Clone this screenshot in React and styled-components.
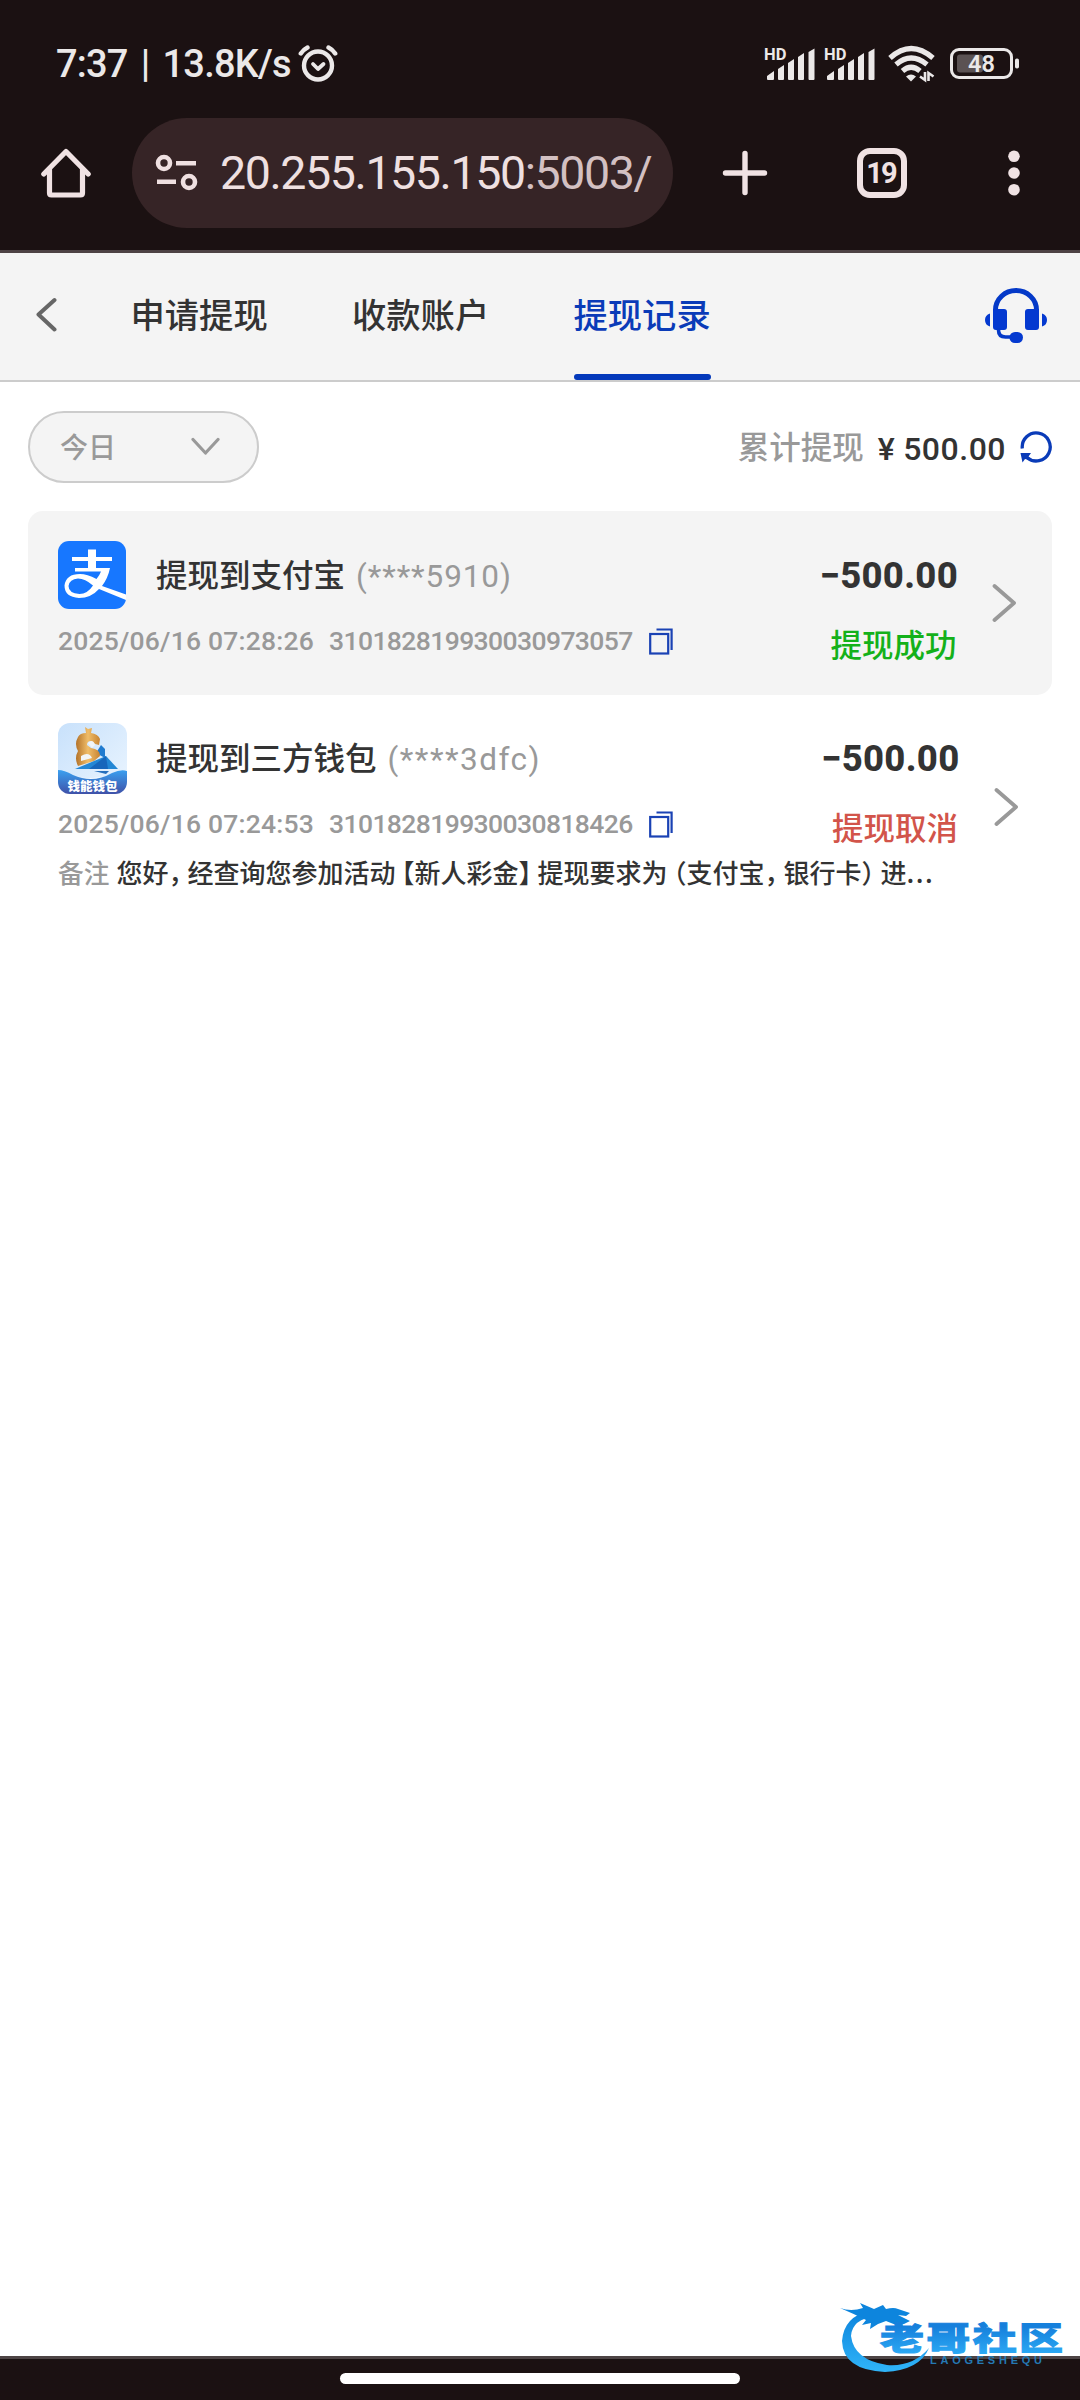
import React from "react";
import styled, { createGlobalStyle } from "styled-components";

const GlobalStyle = createGlobalStyle`
  * { box-sizing: border-box; }
  html, body { margin: 0; padding: 0; background: #fff; }
  body { font-family: Roboto, "Noto Sans CJK SC", sans-serif; font-weight: 500; color: #333; }
  svg { display: block; flex: none; }
`;

const Screen = styled.div`
  width: 1080px;
  height: 2400px;
  display: flex;
  flex-direction: column;
  background: #fff;
  overflow: hidden;
`;

/* ---------- system and browser chrome ---------- */

const Chrome = styled.header`
  height: 253px;
  flex: none;
  background: #1b1112;
  border-bottom: 3px solid #4d4244;
`;

const StatusBar = styled.div`
  height: 118px;
  display: flex;
  align-items: center;
  padding: 9px 60px 0 56px;
`;

const Clock = styled.span`
  width: 242px;
  color: #ebe8e8;
  font-size: 38px;
  line-height: 40px;
  letter-spacing: -0.8px;
  word-spacing: 4.5px;
  white-space: pre;
`;

const StatusIcons = styled.div`
  display: flex;
  align-items: center;
  margin-left: auto;
`;

const Spacer = styled.span`
  flex: none;
  width: ${(p) => p.$width}px;
`;

const AddressBar = styled.div`
  height: 110px;
  display: flex;
  align-items: center;
  padding-left: 41px;
`;

const UrlPill = styled.div`
  width: 541px;
  height: 110px;
  margin-left: 41px;
  padding-left: 23px;
  display: flex;
  align-items: center;
  border-radius: 55px;
  background: #362426;
`;

const Url = styled.span`
  margin-left: 22px;
  font-size: 46.5px;
  font-weight: 400;
  line-height: 60px;
  letter-spacing: -1.4px;
  white-space: nowrap;
  color: #efe0e1;
`;

const UrlRest = styled.span`
  color: #d3c0c2;
`;

const TabCount = styled.div`
  width: 50px;
  height: 50px;
  margin-left: 89px;
  padding-right: 2px;
  display: flex;
  align-items: center;
  justify-content: center;
  border: 6px solid #f0e2e3;
  border-radius: 13px;
  color: #f0e2e3;
  font-size: 29px;
  font-weight: 700;
  line-height: 30px;
  letter-spacing: -2px;
`;

/* ---------- page header ---------- */

const PageHeader = styled.nav`
  height: 129px;
  flex: none;
  display: flex;
  align-items: stretch;
  padding: 0 33px 0 36px;
  background: #f4f4f4;
  border-bottom: 2px solid #ccc;
`;

const HeaderButton = styled.button`
  display: flex;
  align-items: center;
  padding: 0 0 ${(p) => p.$lift}px;
  border: 0;
  background: none;
`;

const Tabs = styled.div`
  display: flex;
  gap: 84.5px;
  margin: 0 auto 0 73.5px;
`;

const Tab = styled.div`
  display: flex;
  flex-direction: column;
  justify-content: space-between;
  width: 137px;
  font-size: 34.3px;
  line-height: 50px;
  padding-top: 38px;
  white-space: nowrap;
  color: ${(p) => (p.$active ? "#0a3bb8" : "#333")};
  &::after {
    content: "";
    height: 6px;
    border-radius: 3px;
    background: ${(p) => (p.$active ? "#0439bb" : "transparent")};
  }
`;

/* ---------- summary row ---------- */

const Summary = styled.div`
  display: flex;
  align-items: center;
  height: 72px;
  flex: none;
  margin: 29px 28px 28px;
`;

const Filter = styled.button`
  width: 231px;
  height: 72px;
  display: flex;
  align-items: center;
  justify-content: space-between;
  padding: 0 37px 2px 30px;
  border: 2px solid #ccc;
  border-radius: 36px;
  background: #f4f4f4;
  font: inherit;
  font-size: 28px;
  color: #999;
`;

const TotalLabel = styled.span`
  margin-left: auto;
  padding-top: 4px;
  font-size: 31.5px;
  line-height: 46px;
  color: #999;
`;

const Total = styled.span`
  display: flex;
  gap: 8px;
  margin: 0 14px 0 14px;
  padding-top: 4px;
  font-size: 32px;
  line-height: 46px;
  letter-spacing: 0.5px;
`;

/* ---------- records ---------- */

const Record = styled.article`
  height: ${(p) => p.$height}px;
  flex: none;
  display: flex;
  margin: 0 28px;
  padding: ${(p) => p.$top}px ${(p) => p.$right}px 0 30px;
  border-radius: 15px;
  background: ${(p) => (p.$shaded ? "#f4f4f4" : "transparent")};
`;

const Details = styled.div`
  display: flex;
  flex-direction: column;
  flex: 1;
  min-width: 0;
`;

const TitleRow = styled.div`
  display: flex;
  align-items: center;
  height: 74px;
`;

const IconBox = styled.div`
  width: 68px;
`;

const Title = styled.span`
  margin-left: 30px;
  padding-top: 3px;
  font-size: 31.5px;
  line-height: 46px;
`;

const Account = styled.span`
  margin-left: 11px;
  padding-top: 3px;
  font-size: 31.5px;
  line-height: 46px;
  font-weight: 400;
  letter-spacing: ${(p) => p.$spacing}px;
  color: #999;
`;

const MetaRow = styled.div`
  display: flex;
  align-items: center;
  height: 32px;
  margin-top: 13px;
  font-size: 26.5px;
  line-height: 32px;
  color: #999;
`;

const Time = styled.span`
  width: 271px;
  letter-spacing: 0.2px;
  white-space: nowrap;
`;

const OrderId = styled.span`
  width: 320px;
  letter-spacing: -0.6px;
`;

const Remark = styled.p`
  margin: 13px -40px 0 0;
  font-size: 26px;
  line-height: 38px;
  white-space: nowrap;
  font-family: "Noto Sans CJK SC", sans-serif;
`;

const RemarkLabel = styled.span`
  margin-right: 7px;
  font-size: 25.7px;
  color: #999;
`;

const Opening = styled.span`
  margin-left: 6px;
  font-feature-settings: "halt";
`;

const Closing = styled.span`
  margin-right: 6px;
  font-feature-settings: "halt";
`;

const Ellipsis = styled.span`
  letter-spacing: 1.5px;
`;

const Result = styled.div`
  display: flex;
  flex-direction: column;
  align-items: flex-end;
  padding-top: 15px;
`;

const Amount = styled.span`
  margin-right: -1px;
  font-size: 36.5px;
  font-weight: 800;
  line-height: 46px;
  letter-spacing: 0.3px;
`;

const State = styled.span`
  margin: 25px 0.5px 0 0;
  font-size: 31.5px;
  line-height: 46px;
  color: ${(p) => (p.$ok ? "#14b11a" : "#d2544a")};
`;

const Go = styled.div`
  display: flex;
  align-items: center;
  margin: -27px 0 0 35px;
`;

/* ---------- bottom ---------- */

const NavBar = styled.footer`
  height: 44px;
  flex: none;
  display: flex;
  justify-content: center;
  align-items: flex-start;
  position: relative;
  margin-top: auto;
  padding-top: 14px;
  border-top: 3px solid #4d4445;
  background: #1b1112;
`;

const Handle = styled.div`
  width: 400px;
  height: 11px;
  border-radius: 5.5px;
  background: #fff;
`;

const Watermark = styled.div`
  position: absolute;
  right: 14px;
  bottom: 24px;
  width: 226px;
  height: 74px;
`;

/* ---------- drawings ---------- */

const AlarmIcon = () => (
  <svg width="40" height="40" viewBox="0 0 40 40" fill="none" stroke="#ebe8e8" strokeLinecap="round" strokeLinejoin="round">
    <circle cx="20" cy="21.5" r="14" strokeWidth="4.4" />
    <path d="M2.8 9.5Q5.5 5.5 9.5 3.5M37.2 9.5Q34.5 5.5 30.5 3.5" strokeWidth="4.4" />
    <path d="M15 20l5 5 5.5-5" strokeWidth="3.8" />
  </svg>
);

const SignalIcon = () => (
  <svg width="52" height="38" viewBox="0 0 52 38" fill="#ebe8e8">
    <text x="0" y="14.5" fontSize="16.5" fontWeight="700" fontFamily="Roboto, sans-serif">HD</text>
    <path d="M3 34v-3l7-5v8q0 1-1 1H4q-1 0-1-1ZM14 34V24l6-4v14q0 1-1 1h-4q-1 0-1-1ZM24 34V18l6-4v20q0 1-1 1h-4q-1 0-1-1ZM34 34V12l6-4v26q0 1-1 1h-4q-1 0-1-1ZM44.5 34V7l6-3.5V34q0 1-1 1h-4q-1 0-1-1Z" />
  </svg>
);

const WifiIcon = () => (
  <svg width="48" height="38" viewBox="0 0 48 38" fill="none" stroke="#ebe8e8" strokeWidth="5.2">
    <path d="M2 13Q23-6 45 13M8 19.5Q23 6.5 39 19.5M14.5 26Q23 18.5 32 26" />
    <path d="M18 31.5q5-4 10 0l-5 5Z" fill="#ebe8e8" stroke="none" />
    <path d="M37 27v8l-5-3.5M40.5 36v-8l5 3.5" strokeWidth="2.6" />
  </svg>
);

const BatteryIcon = () => (
  <svg width="70" height="32" viewBox="0 0 70 32">
    <rect x="1.5" y="1.5" width="60" height="28" rx="7.5" fill="none" stroke="#ebe8e8" strokeWidth="3" />
    <rect x="7" y="6.5" width="26" height="18" rx="3" fill="#5b5253" />
    <rect x="65" y="10.5" width="4" height="10" rx="1.8" fill="#ebe8e8" />
    <text x="31.5" y="24" fontSize="23.5" fontWeight="600" textAnchor="middle" fontFamily="Roboto, sans-serif" fill="#ebe8e8">48</text>
  </svg>
);

const HomeIcon = () => (
  <svg width="50" height="52" viewBox="0 0 50 52" fill="none" stroke="#f0e2e3" strokeWidth="5.2" strokeLinejoin="round" strokeLinecap="round">
    <path d="M2.8 27L25 4.5 47.2 27M8.5 22v24q0 2 2 2h29q2 0 2-2V22" />
  </svg>
);

const TuneIcon = () => (
  <svg width="43" height="38" viewBox="0 0 43 38" fill="none" stroke="#efe0e1" strokeWidth="4.6">
    <circle cx="9" cy="9" r="6" />
    <circle cx="34" cy="28" r="6" />
    <path d="M21 9.2h20M2 27.8h19" />
  </svg>
);

const PlusIcon = () => (
  <svg width="46" height="46" viewBox="0 0 46 46" stroke="#f0e2e3" strokeWidth="5.4" strokeLinecap="round">
    <path d="M23 3.5v39M3.5 23h39" />
  </svg>
);

const MoreIcon = () => (
  <svg width="12" height="46" viewBox="0 0 12 46" fill="#f0e2e3">
    <circle cx="6" cy="6.3" r="5.8" />
    <circle cx="6" cy="23" r="5.8" />
    <circle cx="6" cy="39.7" r="5.8" />
  </svg>
);

const BackIcon = () => (
  <svg width="21" height="36" viewBox="0 0 21 36" fill="none" stroke="#666" strokeWidth="4" strokeLinecap="round" strokeLinejoin="round">
    <path d="M18.5 3L2.5 17.5 18.5 32.5" />
  </svg>
);

const HeadsetIcon = () => (
  <svg width="62" height="56" viewBox="0 0 62 56" fill="#0439d0">
    <path d="M10.5 24V22a20.5 19.5 0 0 1 41 0v2" fill="none" stroke="#0439c8" strokeWidth="5" />
    <path d="M8 21h11q3 0 3 3v15q0 3-3 3h-8q-3 0-3-3ZM54 21H43q-3 0-3 3v15q0 3 3 3h8q3 0 3-3ZM5 25.5v13Q0 37 0 32t5-6.5ZM57 25.5v13q5-1.5 5-6.5t-5-6.5Z" />
    <path d="M13.5 40v2q0 7 7 7H28" fill="none" stroke="#0439c8" strokeWidth="3.6" />
    <rect x="24.5" y="44" width="13.5" height="11" rx="5.5" />
  </svg>
);

const RefreshIcon = () => (
  <svg width="32" height="32" viewBox="0 0 32 32" fill="none" stroke="#0a3bb8" strokeWidth="3.3">
    <path d="M2.3 17.5A14 14 0 1 1 7 26.5" />
    <path d="M.5 22h10.5L8.5 25.5l1.5 3.5-5-1-2.5 3.5Z" fill="#0a3bb8" stroke="none" />
  </svg>
);

const DownIcon = () => (
  <svg width="29" height="19" viewBox="0 0 29 19" fill="none" stroke="#999" strokeWidth="3.2" strokeLinecap="round" strokeLinejoin="round">
    <path d="M2 2.5L14.5 16 27 2.5" />
  </svg>
);

const RightIcon = () => (
  <svg width="24" height="40" viewBox="0 0 24 40" fill="none" stroke="#999" strokeWidth="3.8" strokeLinecap="round" strokeLinejoin="round">
    <path d="M2.5 3L22 20 2.5 37" />
  </svg>
);

const CopyIcon = () => (
  <svg width="24" height="27" viewBox="0 0 24 27" fill="none" stroke="#1a42b4" strokeWidth="2.2">
    <rect x="1.2" y="6" width="18" height="19.5" />
    <path d="M7.5 1.5H22.6V22" />
  </svg>
);

const AlipayIcon = () => (
  <svg width="68" height="68" viewBox="0 0 68 68">
    <rect width="68" height="68" rx="11" fill="#1777ff" />
    <path d="M30 8.5h8V16h16v4H38v7h14q-2 10-8 18L68 53.5v5.5L41 48Q33 57 21 57 6.5 56 6.5 44.5 8 33 22 33q7 0 16.5 5 3-3.5 4.5-7.5H17V27h13v-7H14V16h16ZM35 44.5Q27 37.5 20 37.5q-8.5.5-9.5 7.5 0 7 11 8 8 0 13.5-8.5Z" fill="#fff" fillRule="evenodd" />
  </svg>
);

const WalletIcon = () => (
  <svg width="69" height="71" viewBox="0 0 69 71">
    <defs>
      <linearGradient id="sky" x1="0" y1="0" x2="1" y2="1">
        <stop offset="0" stopColor="#c8e1fb" />
        <stop offset="1" stopColor="#ebf5ff" />
      </linearGradient>
      <linearGradient id="sea" x1="0" y1="0" x2="0" y2="1">
        <stop offset="0" stopColor="#3aa0f0" />
        <stop offset="1" stopColor="#3f51a8" />
      </linearGradient>
      <linearGradient id="gold" x1="0" y1="0" x2="1" y2="0">
        <stop offset="0" stopColor="#b4732a" />
        <stop offset=".5" stopColor="#f0bd69" />
        <stop offset="1" stopColor="#c88432" />
      </linearGradient>
      <clipPath id="tile"><rect width="69" height="71" rx="12" /></clipPath>
    </defs>
    <g clipPath="url(#tile)">
      <rect width="69" height="71" fill="url(#sky)" />
      <path d="M0 48q16 8 35 7 22-2 34-8v24H0Z" fill="#f7fbff" />
      <path d="M0 47q6 0 15 5 20 9 39-2 9-4 15-2v23H0Z" fill="url(#sea)" />
      <path d="M38 30l5-8 4 4v9Z" fill="#1f7bd0" />
      <path d="M27 4l3 2 4-1-1 5q7 1 9 6l-1 6q-5-1-8-4-4 0-4 4l4 3q9 1 9 8l-6 5-16 5q-4-8 0-15-4-7 0-14 2-4 8-4Z" fill="url(#gold)" />
      <path d="M30 20q5-5 7 2l-3 3ZM23 33q8-5 11 2l-11 3Z" fill="#f2f5f7" />
      <path d="M17 46l31-13 12 13Z" fill="#2387d5" />
      <path d="M31 46l17-13 2 13Z" fill="#1766bb" />
      <path d="M36 48h15l-3 3Z" fill="#256fbd" />
      <text x="34.5" y="68" fontSize="12.5" fontWeight="900" textAnchor="middle" fontFamily="'Noto Sans CJK SC', sans-serif" fill="#fff">钱能钱包</text>
    </g>
  </svg>
);

const Dragon = () => (
  <svg width="226" height="74" viewBox="0 0 226 74">
    <defs>
      <linearGradient id="ring" x1="0" y1="0" x2="0" y2="1">
        <stop offset="0" stopColor="#0c83dc" />
        <stop offset="1" stopColor="#30b4f8" />
      </linearGradient>
      <linearGradient id="word" x1="0" y1="0" x2="0" y2="1">
        <stop offset="0.3" stopColor="#1680dc" />
        <stop offset="1" stopColor="#2fb0f8" />
      </linearGradient>
    </defs>
    <path d="M30 9Q4 14 2 39 3 68 45 70 80 68 89 46 73 65 47 63 14 58 11 34 12 17 36 14Z" fill="url(#ring)" />
    <path d="M0 6q11 4 23 0l-3-5 14 6 9-4 3 4q8-2 12 0l12 4-4 3-8-1 12 6-6 3-8 1-10-4-8 3-8 5 1-6-9 2 4-5Q12 11 0 6Z" fill="#0d85dd" />
    <text x="40" y="46" fontSize="44" fontWeight="900" fontFamily="'Noto Sans CJK SC', sans-serif" fill="url(#word)" stroke="url(#word)" strokeWidth="1.4" textLength="183" lengthAdjust="spacing" transform="translate(0 14.5) scale(1 .72)">老哥社区</text>
    <text x="90" y="61.5" fontSize="11" fontWeight="700" fontFamily="'Liberation Sans', sans-serif" fill="#2579b4" textLength="112" lengthAdjust="spacing">LAOGESHEQU</text>
  </svg>
);

/* ---------- content ---------- */

const records = [
  {
    icon: <AlipayIcon />, title: "提现到支付宝", account: "(****5910)", spacing: 0.9,
    time: "2025/06/16 07:28:26", id: "310182819930030973057",
    ok: true, state: "提现成功", height: 184, top: 27, right: 36,
  },
  {
    icon: <WalletIcon />, title: "提现到三方钱包", account: "(****3dfc)", spacing: 1.5,
    time: "2025/06/16 07:24:53", id: "310182819930030818426",
    ok: false, state: "提现取消", height: 224, top: 26, right: 34.5,
    remark: "您好，经查询您参加活动【新人彩金】提现要求为（支付宝，银行卡）进...",
  },
];

const punctuate = (text) =>
  text.split(/([，【】（）]|\.\.\.)/).map((part, i) => {
    if (part === "...") return <Ellipsis key={i}>{part}</Ellipsis>;
    if (part === "【" || part === "（") return <Opening key={i}>{part}</Opening>;
    if (part === "，" || part === "】" || part === "）") return <Closing key={i}>{part}</Closing>;
    return part;
  });

export default function App() {
  return (
    <Screen>
      <GlobalStyle />
      <Chrome>
        <StatusBar>
          <Clock>7:37 | 13.8K/s</Clock>
          <AlarmIcon />
          <StatusIcons>
            <SignalIcon />
            <Spacer $width={8} />
            <SignalIcon />
            <Spacer $width={12} />
            <WifiIcon />
            <Spacer $width={14} />
            <BatteryIcon />
          </StatusIcons>
        </StatusBar>
        <AddressBar>
          <HomeIcon />
          <UrlPill>
            <TuneIcon />
            <Url>20.255.155.150<UrlRest>:5003/</UrlRest></Url>
          </UrlPill>
          <Spacer $width={49} />
          <PlusIcon />
          <TabCount>19</TabCount>
          <Spacer $width={101} />
          <MoreIcon />
        </AddressBar>
      </Chrome>

      <PageHeader>
        <HeaderButton $lift={3}><BackIcon /></HeaderButton>
        <Tabs>
          <Tab>申请提现</Tab>
          <Tab>收款账户</Tab>
          <Tab $active>提现记录</Tab>
        </Tabs>
        <HeaderButton $lift={1}><HeadsetIcon /></HeaderButton>
      </PageHeader>

      <Summary>
        <Filter>今日<DownIcon /></Filter>
        <TotalLabel>累计提现</TotalLabel>
        <Total><span>¥</span><span>500.00</span></Total>
        <RefreshIcon />
      </Summary>

      {records.map((r) => (
        <Record key={r.id} $shaded={r.ok} $height={r.height} $top={r.top} $right={r.right}>
          <Details>
            <TitleRow>
              <IconBox>{r.icon}</IconBox>
              <Title>{r.title}</Title>
              <Account $spacing={r.spacing}>{r.account}</Account>
            </TitleRow>
            <MetaRow>
              <Time>{r.time}</Time>
              <OrderId>{r.id}</OrderId>
              <CopyIcon />
            </MetaRow>
            {r.remark && (
              <Remark><RemarkLabel>备注</RemarkLabel>{punctuate(r.remark)}</Remark>
            )}
          </Details>
          <Result>
            <Amount>−500.00</Amount>
            <State $ok={r.ok}>{r.state}</State>
          </Result>
          <Go><RightIcon /></Go>
        </Record>
      ))}

      <NavBar>
        <Handle />
        <Watermark><Dragon /></Watermark>
      </NavBar>
    </Screen>
  );
}
